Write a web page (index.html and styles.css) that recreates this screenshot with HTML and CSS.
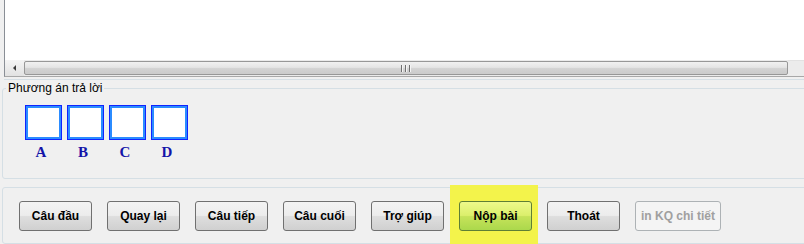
FILE: index.html
```html
<!DOCTYPE html>
<html lang="vi">
<head>
    <meta charset="UTF-8">
    <meta name="viewport" content="width=device-width, initial-scale=1.0">
    <title>Làm bài thi</title>
    <link rel="stylesheet" href="styles.css">
</head>
<body>
    <div class="viewer">
        <div class="question-area"></div>
        <div class="hscroll">
            <div class="scroll-arrow"><span class="arrow-left"></span></div>
            <div class="scroll-thumb">
                <span class="grip"></span><span class="grip"></span><span class="grip"></span>
            </div>
            <div class="scroll-rest"></div>
        </div>
    </div>

    <fieldset class="answers">
        <legend>Phương án trả lời</legend>
        <div class="choices">
            <div class="choice"><div class="choice-box"></div><span class="choice-label">A</span></div>
            <div class="choice"><div class="choice-box"></div><span class="choice-label">B</span></div>
            <div class="choice"><div class="choice-box"></div><span class="choice-label">C</span></div>
            <div class="choice"><div class="choice-box"></div><span class="choice-label">D</span></div>
        </div>
    </fieldset>

    <div class="toolbar">
        <button type="button" class="btn">Câu đầu</button>
        <button type="button" class="btn">Quay lại</button>
        <button type="button" class="btn">Câu tiếp</button>
        <button type="button" class="btn">Câu cuối</button>
        <button type="button" class="btn">Trợ giúp</button>
        <span class="highlight">
            <button type="button" class="btn btn-submit">Nộp bài</button>
        </span>
        <button type="button" class="btn">Thoát</button>
        <button type="button" class="btn btn-wide" disabled>in KQ chi tiết</button>
    </div>
</body>
</html>
```

FILE: styles.css
```css
body {
    margin: 0;
    width: 804px;
    height: 244px;
    overflow: hidden;
    background-color: #f0f0f0;
    font-family: "Liberation Sans", Arial, sans-serif;
    color: #000;
}
.viewer {
    margin-left: 4px;
    border-left: 1px solid #8a8f96;
    border-bottom: 1px solid #a8a8a8;
    box-shadow: 0 2px 0 #f0f0f0, 0 3px 0 #d5dfe5;
}
.question-area {
    height: 60px;
    background: white;
}
.hscroll {
    display: flex;
    height: 16px;
    background: #ebebeb;
}
.scroll-arrow {
    width: 19px;
    display: flex;
    align-items: center;
    justify-content: center;
    background: linear-gradient(#f4f4f4, #e2e2e2);
}
.arrow-left {
    width: 0;
    height: 0;
    border-top: 3px solid transparent;
    border-bottom: 3px solid transparent;
    border-right: 3px solid #3a3a3a;
}
.scroll-thumb {
    flex: 1;
    margin: 1px 0;
    border: 1px solid #979797;
    border-radius: 2px;
    background: linear-gradient(#f1f1f1 0%, #e4e4e4 45%, #d2d2d2 55%, #cbcbcb 100%);
    display: flex;
    align-items: center;
    justify-content: center;
    gap: 2px;
}
.grip {
    width: 1px;
    height: 7px;
    background: #6f6f6f;
    border-right: 1px solid #f4f4f4;
}
.scroll-rest {
    width: 16px;
    background: #ececec;
    border-top: 1px solid #e2e2e2;
}
.answers {
    margin: 4px -10px 0 2px;
    padding: 10px 0 0 22px;
    height: 86px;
    border: 1px solid #d5dfe5;
    border-radius: 3px;
}
.answers legend {
    margin-left: -19px;
    padding: 0 2px;
    font-size: 12px;
    line-height: 14px;
}
.choices {
    display: flex;
    gap: 5px;
}
.choice {
    display: flex;
    flex-direction: column;
    align-items: center;
}
.choice-box {
    width: 31px;
    height: 29px;
    background: white;
    border: 1px solid #1024ff;
    box-shadow: inset 0 0 0 2px #2b8cff;
    padding: 2px;
}
.choice-label {
    margin-top: 4px;
    margin-right: 5px;
    font-family: "Liberation Serif", "Times New Roman", serif;
    font-weight: bold;
    font-size: 15px;
    line-height: 17px;
    color: #1414a8;
}
.toolbar {
    margin: 8px -10px 0 2px;
    height: 42px;
    padding: 13px 0 0 16px;
    border: 1px solid #d5dfe5;
    border-radius: 3px;
    display: flex;
    align-items: flex-start;
    gap: 15px;
}
.btn {
    position: relative;
    z-index: 1;
    width: 73px;
    height: 30px;
    padding: 0;
    border: 1px solid #707070;
    border-radius: 3px;
    background: linear-gradient(#f3f3f3 0%, #ececec 48%, #dedede 52%, #d0d0d0 100%);
    font-family: "Liberation Sans", Arial, sans-serif;
    font-weight: bold;
    font-size: 12px;
    color: #000;
}
.btn-wide {
    width: 86px;
}
.btn:disabled {
    background: #f4f4f4;
    border-color: #adb2b5;
    color: #a0a0a0;
}
.btn-submit {
    border-color: #5f7f35;
    background: linear-gradient(#eef98a 0%, #dbef6c 48%, #c6e35a 52%, #abd84c 100%);
}
.highlight {
    position: relative;
    display: flex;
}
.highlight::before {
    content: "";
    position: absolute;
    left: -9px;
    right: -6px;
    top: -16px;
    bottom: -15px;
    background: #f3f34b;
}
```
